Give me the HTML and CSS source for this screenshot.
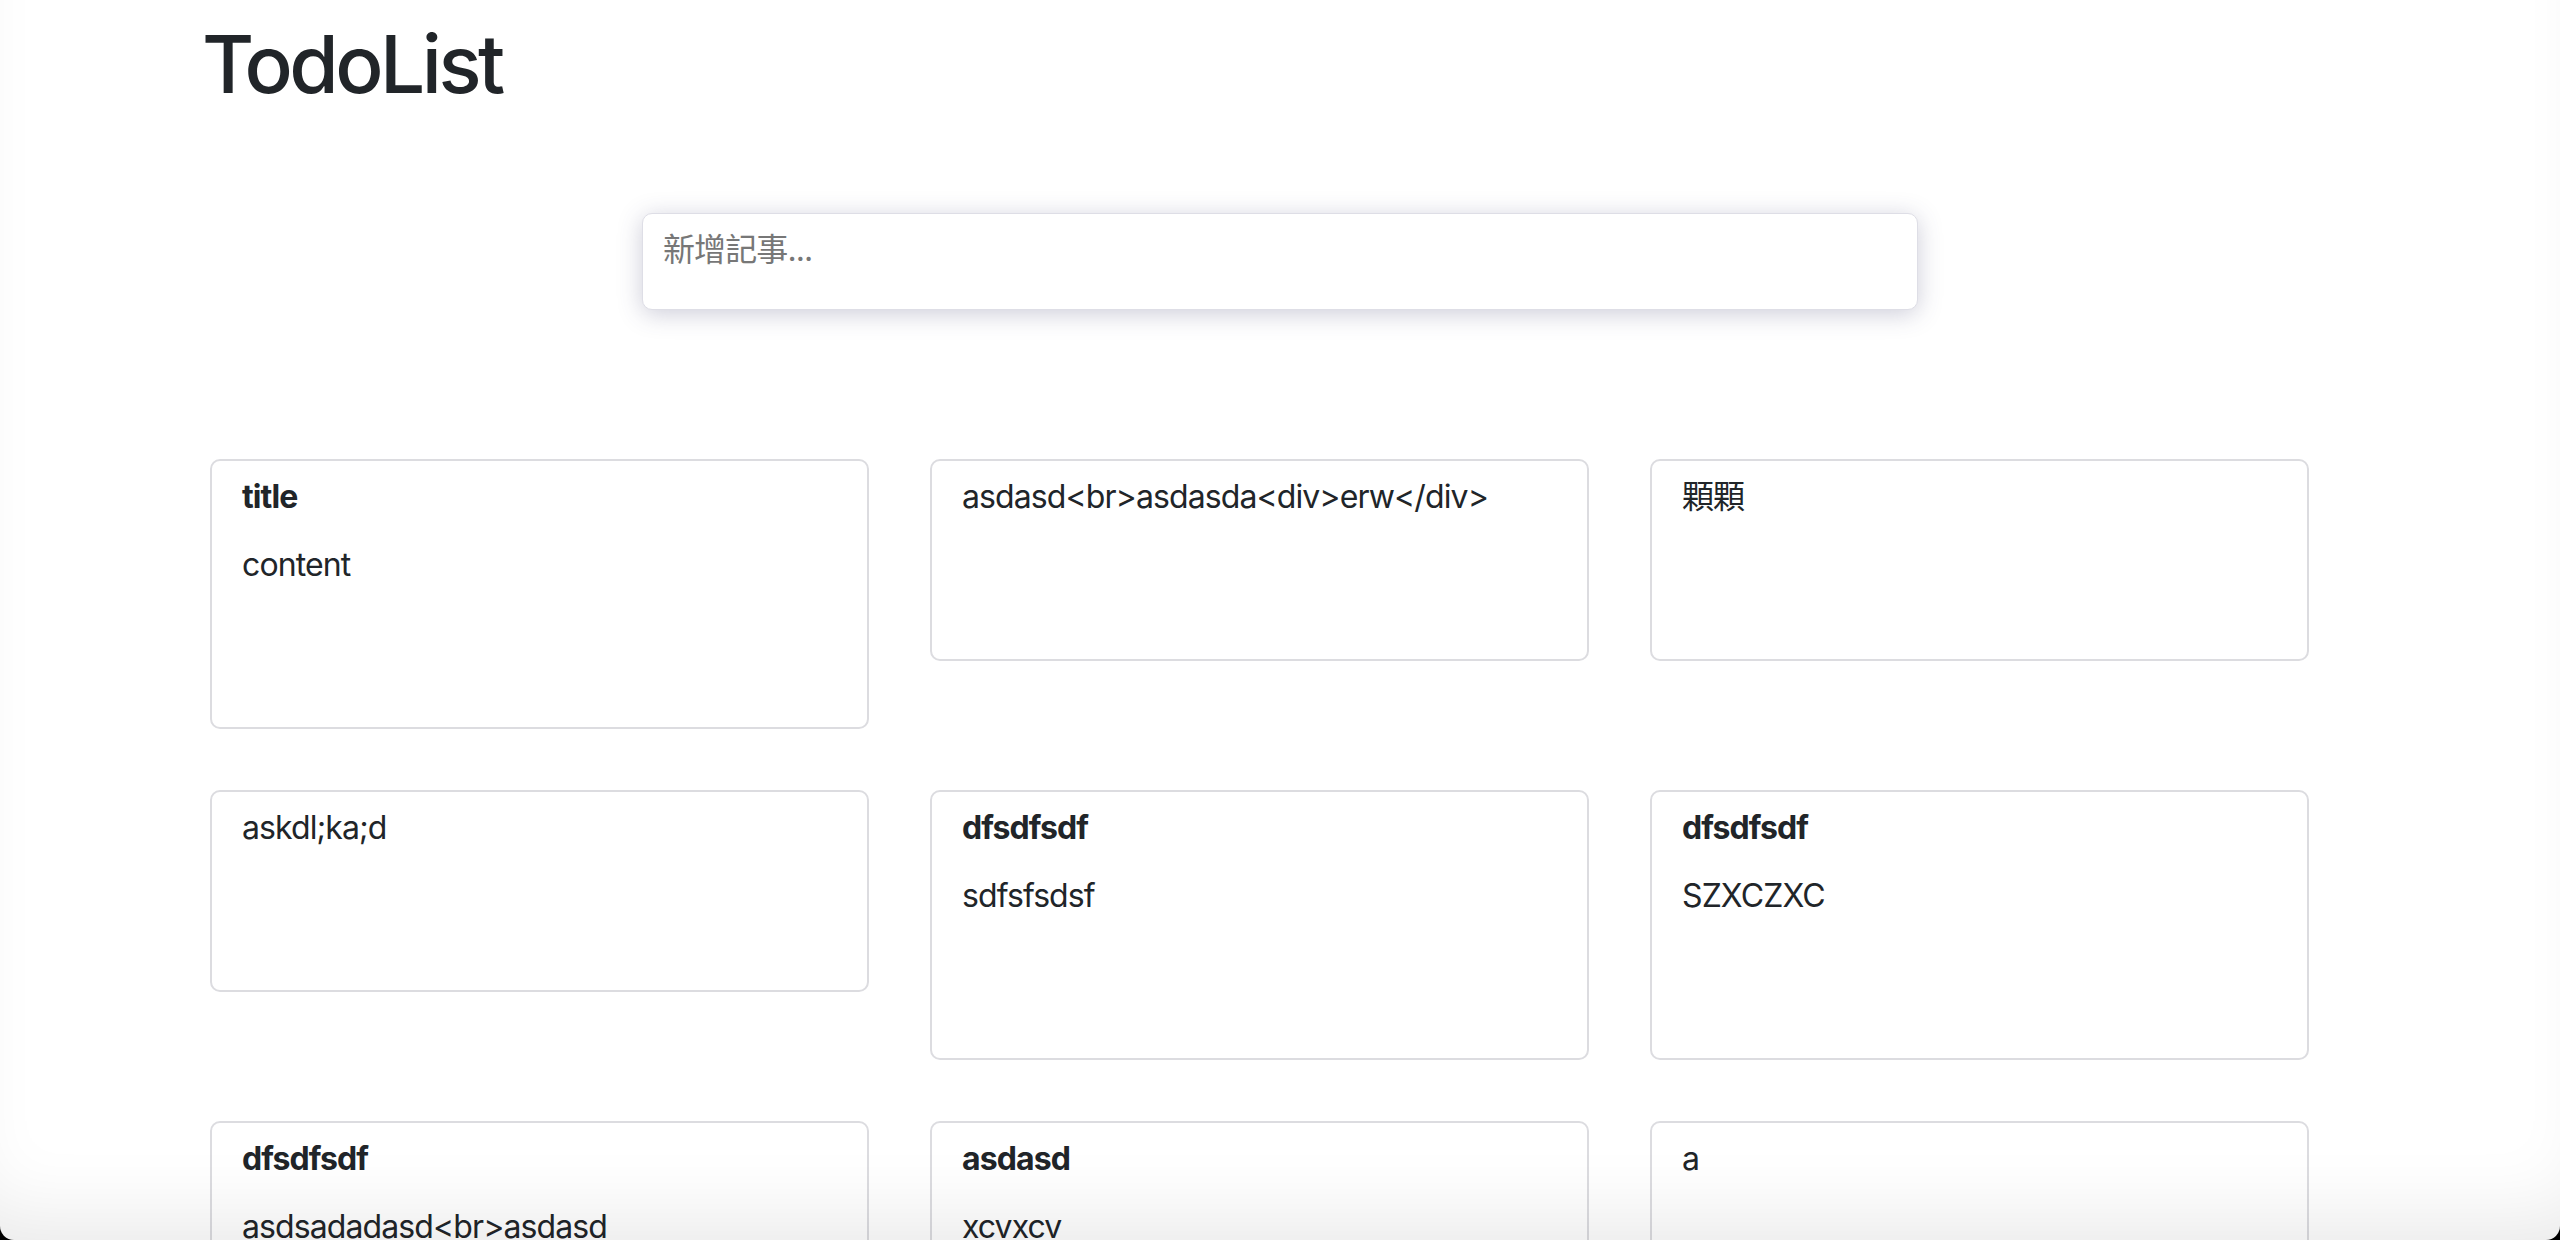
FILE: index.html
```html
<!DOCTYPE html>
<html lang="zh-Hant">
<head>
<meta charset="utf-8">
<title>TodoList</title>
<link rel="stylesheet" href="styles.css">
</head>
<body>
<header class="header">
  <h1 class="brand">TodoList</h1>
</header>
<section class="composer-row">
  <textarea class="composer" placeholder="新增記事..."></textarea>
</section>
<main class="notes">
  <article class="note">
    <h2 class="note-title">title</h2>
    <p class="note-text">content</p>
    <div class="note-foot"></div>
  </article>
  <article class="note">
    <p class="note-text">asdasd&lt;br&gt;asdasda&lt;div&gt;erw&lt;/div&gt;</p>
    <div class="note-foot"></div>
  </article>
  <article class="note">
    <p class="note-text">顆顆</p>
    <div class="note-foot"></div>
  </article>
  <article class="note">
    <p class="note-text">askdl;ka;d</p>
    <div class="note-foot"></div>
  </article>
  <article class="note">
    <h2 class="note-title">dfsdfsdf</h2>
    <p class="note-text">sdfsfsdsf</p>
    <div class="note-foot"></div>
  </article>
  <article class="note">
    <h2 class="note-title">dfsdfsdf</h2>
    <p class="note-text">SZXCZXC</p>
    <div class="note-foot"></div>
  </article>
  <article class="note">
    <h2 class="note-title">dfsdfsdf</h2>
    <p class="note-text">asdsadadasd&lt;br&gt;asdasd</p>
    <div class="note-foot"></div>
  </article>
  <article class="note">
    <h2 class="note-title">asdasd</h2>
    <p class="note-text">xcvxcv</p>
    <div class="note-foot"></div>
  </article>
  <article class="note">
    <p class="note-text">a</p>
    <div class="note-foot"></div>
  </article>
</main>
<div class="window-frame"></div>
</body>
</html>
```
FILE: styles.css
```css
html {
  overflow: hidden;
}
body {
  margin: 0;
  background: #fff;
  color: #212529;
  font-family: "Inter", "Noto Sans CJK TC", sans-serif;
  font-size: 32px;
  line-height: 48px;
  letter-spacing: -0.9px;
}
.header {
  padding-left: 202px;
}
.brand {
  margin: 16px 0 0;
  font-size: 80px;
  line-height: 96px;
  font-weight: 500;
  letter-spacing: -3.5px;
  color: #212529;
}
.composer-row {
  display: flex;
  justify-content: center;
  margin-top: 101px;
}
.composer {
  box-sizing: border-box;
  width: 1276px;
  height: 97px;
  padding: 12px 20px;
  border: 1px solid #dedee6;
  border-radius: 10px;
  resize: none;
  outline: none;
  font-family: "Inter", "Noto Sans CJK TC", sans-serif;
  font-size: 32px;
  line-height: 48px;
  letter-spacing: -0.9px;
  color: #212529;
  background: #fff;
  box-shadow: 0 4px 24px rgba(60, 60, 110, 0.26);
}
.composer::placeholder {
  color: #777;
}
.notes {
  display: grid;
  grid-template-columns: repeat(3, 659px);
  column-gap: 61px;
  row-gap: 61px;
  align-items: start;
  margin-top: 149px;
  padding-left: 210px;
}
.note {
  border: 2px solid #dcdce0;
  border-radius: 10px;
  padding: 12px 30px 0;
  background: #fff;
}
.note-title {
  margin: 0 0 20px;
  font-size: 32px;
  line-height: 48px;
  font-weight: 700;
}
.note-text {
  margin: 0;
}
.note-foot {
  height: 138px;
}
.window-frame {
  position: fixed;
  inset: 0;
  pointer-events: none;
  border-radius: 0 0 14px 14px;
  box-shadow: 0 0 0 40px #000, inset 0 -60px 80px -40px rgba(0, 0, 0, 0.09);
}
```
